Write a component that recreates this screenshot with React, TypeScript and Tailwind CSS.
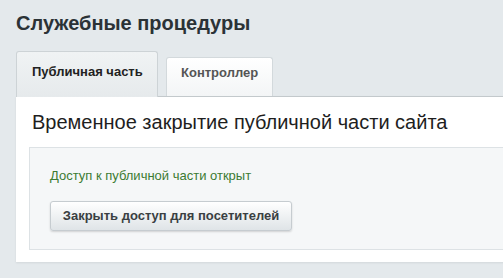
export default function App() {
  return (
    <div className="w-[503px] h-[278px] overflow-hidden bg-[#e4e9ec] pl-4 pt-[11px] font-['Liberation_Sans',Arial,sans-serif]">
      {/* Page title */}
      <h1 className="text-[20px] leading-[24px] font-bold text-[#2b3236]">Служебные процедуры</h1>

      {/* Tabs */}
      <div className="mt-4 flex items-end gap-2">
        <div className="relative z-10 -mb-px h-[46px] w-[142px] whitespace-nowrap rounded-t-[3px] border border-b-0 border-[#cdd3d6] bg-gradient-to-b from-[#f0f3f4] to-[#e6eaec] pl-[15px] pt-[12px] text-[13px] leading-4 font-bold text-[#222]">
          Публичная часть
        </div>
        <div className="h-[39px] w-[107px] whitespace-nowrap rounded-t-[3px] border border-b-0 border-[#d3d9dc] bg-gradient-to-b from-[#ffffff] to-[#f3f5f6] pl-[14px] pt-[7px] text-[13px] leading-4 font-bold text-[#555]">
          Контроллер
        </div>
      </div>

      {/* Panel */}
      <div className="w-[520px] border-t border-[#c3c9cc] bg-white pl-[13px] pt-[13px] pb-3 shadow-[0_1px_2px_rgba(0,0,0,0.08)]">
        <h2 className="text-[20px] leading-[24px] text-[#1e1e1e] pl-[3px]">
          Временное закрытие публичной части сайта
        </h2>

        <div className="mt-[13px] border border-r-0 border-[#dde2e5] bg-[#f5f7f8] pl-[20px] pt-[20px] pb-[18px]">
          <p className="text-[13px] leading-4 text-[#3c7b32]">Доступ к публичной части открыт</p>
          <button className="mt-[17px] h-[30px] w-[242px] rounded-[3px] border border-[#c6ccd0] bg-gradient-to-b from-white to-[#dfe4e7] text-[13px] font-bold text-[#3a3f42] shadow-[0_1px_2px_rgba(0,0,0,0.15)]">
            Закрыть доступ для посетителей
          </button>
        </div>
      </div>
    </div>
  );
}
